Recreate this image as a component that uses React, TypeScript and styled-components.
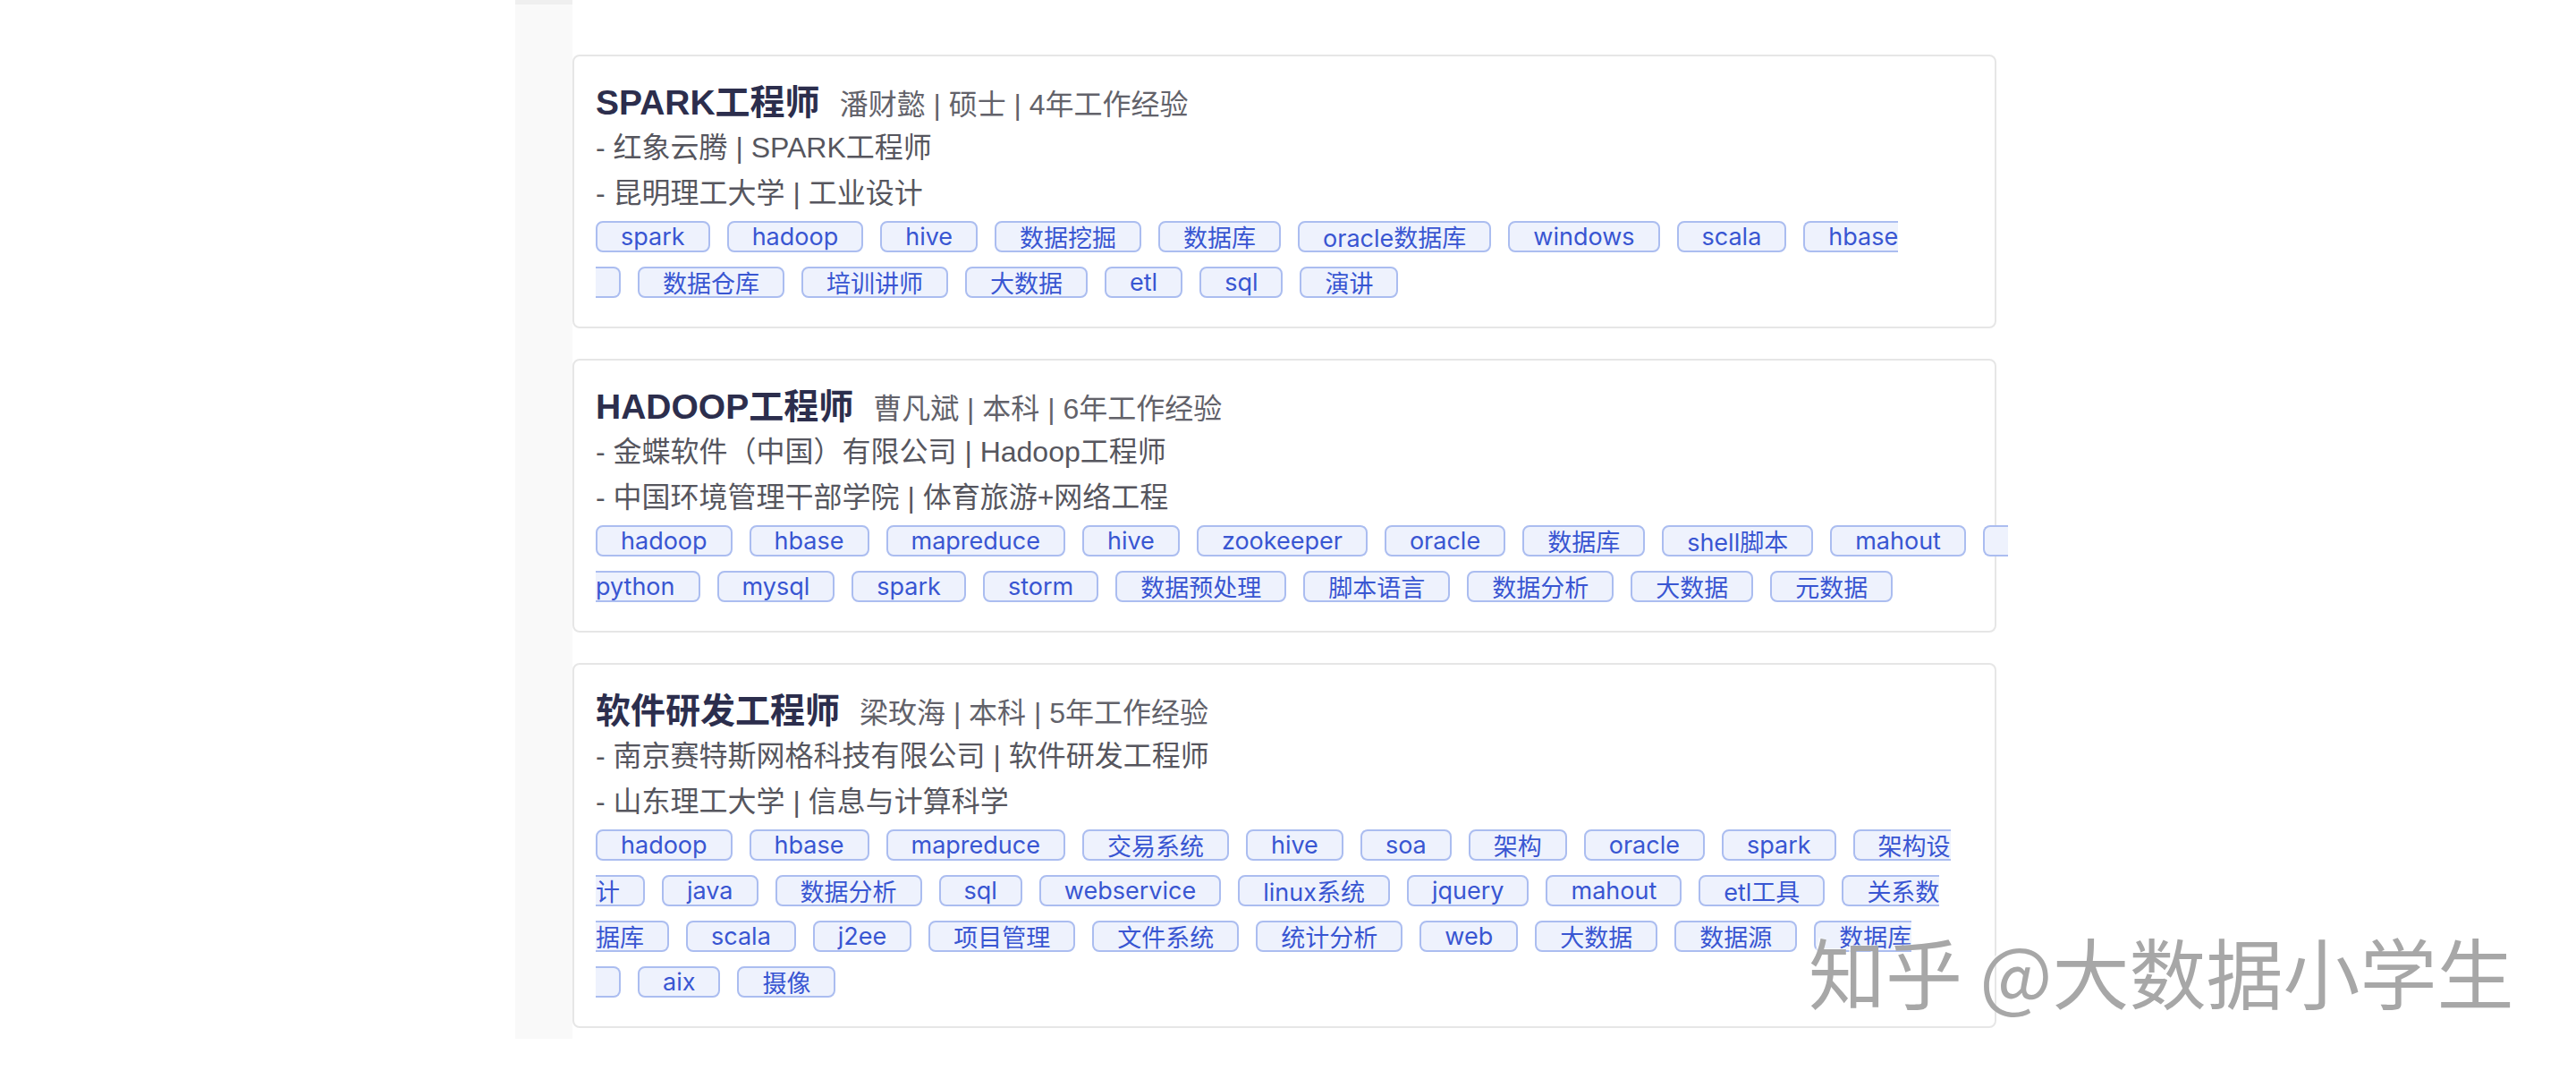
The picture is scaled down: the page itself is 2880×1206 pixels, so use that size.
import React from "react";
import styled, { createGlobalStyle } from "styled-components";

const GlobalStyle = createGlobalStyle`
  html, body {
    margin: 0;
    padding: 0;
    background: #ffffff;
  }
  * { box-sizing: border-box; }
`;

const FONT = `"Liberation Sans", "Noto Sans CJK SC", sans-serif`;
const TAG_FONT = `"Inter", "Noto Sans CJK SC", sans-serif`;

const Page = styled.div`
  position: relative;
  width: 2880px;
  height: 1206px;
  overflow: hidden;
  background: #ffffff;
  font-family: ${FONT};
  display: flex;
  padding-left: 576px;
`;

const Gutter = styled.div`
  width: 64px;
  height: 1161px;
  background: #f9f9f9;
  border-top: 5px solid #efefef;
  flex-shrink: 0;
`;

const CardList = styled.div`
  display: flex;
  flex-direction: column;
  gap: 34px;
  padding-top: 61px;
  width: 1592px;
`;

const Card = styled.section`
  border: 2px solid #e6e6e6;
  border-radius: 8px;
  background: #ffffff;
  padding: 26px 24px 32px 24px;
`;

const TitleLine = styled.div`
  display: flex;
  align-items: baseline;
  height: 51px;
  line-height: 51px;
  white-space: nowrap;
`;

const Title = styled.span`
  font-size: 39px;
  font-weight: 700;
  color: #2c2e4d;
`;

const Meta = styled.span`
  font-size: 32px;
  color: #62626a;
  margin-left: 22px;
`;

const InfoLine = styled.div`
  font-size: 32px;
  line-height: 51px;
  height: 51px;
  color: #56565e;
  white-space: nowrap;
`;

const Tags = styled.div`
  display: flex;
  flex-direction: column;
  gap: 16px;
  margin-top: 5px;
`;

const TagRow = styled.div`
  display: flex;
  gap: 19px;
  flex-wrap: nowrap;
  white-space: nowrap;
`;

type Cut = "none" | "start" | "end";

const Tag = styled.span<{ $cut: Cut }>`
  display: inline-flex;
  align-items: center;
  height: 35px;
  padding: 0 26px;
  font-family: ${TAG_FONT};
  font-size: 27px;
  color: #3956d2;
  background: #eef2fd;
  border: 2px solid #abbdf0;
  border-radius: 8px;
  flex-shrink: 0;
  ${(p) =>
    p.$cut === "start" &&
    `
    border-right: none;
    border-top-right-radius: 0;
    border-bottom-right-radius: 0;
    padding-right: 0;
  `}
  ${(p) =>
    p.$cut === "end" &&
    `
    border-left: none;
    border-top-left-radius: 0;
    border-bottom-left-radius: 0;
    padding-left: 0;
  `}
`;

const Watermark = styled.div`
  position: absolute;
  left: 2022px;
  top: 1036px;
  font-size: 86px;
  line-height: 98px;
  color: #a7a7a7;
  font-family: "Noto Sans CJK SC", "Liberation Sans", sans-serif;
  white-space: nowrap;
  text-shadow: -2px -1px 0 rgba(255, 255, 255, 0.6);
  pointer-events: none;
`;

type TagItem = { t: string; c?: Cut };

type Resume = {
  title: string;
  meta: string;
  lines: string[];
  rows: TagItem[][];
};

const resumes: Resume[] = [
  {
    title: "SPARK工程师",
    meta: "潘财懿 | 硕士 | 4年工作经验",
    lines: ["- 红象云腾 | SPARK工程师", "- 昆明理工大学 | 工业设计"],
    rows: [
      [
        { t: "spark" },
        { t: "hadoop" },
        { t: "hive" },
        { t: "数据挖掘" },
        { t: "数据库" },
        { t: "oracle数据库" },
        { t: "windows" },
        { t: "scala" },
        { t: "hbase", c: "start" },
      ],
      [
        { t: "", c: "end" },
        { t: "数据仓库" },
        { t: "培训讲师" },
        { t: "大数据" },
        { t: "etl" },
        { t: "sql" },
        { t: "演讲" },
      ],
    ],
  },
  {
    title: "HADOOP工程师",
    meta: "曹凡斌 | 本科 | 6年工作经验",
    lines: [
      "- 金蝶软件（中国）有限公司 | Hadoop工程师",
      "- 中国环境管理干部学院 | 体育旅游+网络工程",
    ],
    rows: [
      [
        { t: "hadoop" },
        { t: "hbase" },
        { t: "mapreduce" },
        { t: "hive" },
        { t: "zookeeper" },
        { t: "oracle" },
        { t: "数据库" },
        { t: "shell脚本" },
        { t: "mahout" },
        { t: "", c: "start" },
      ],
      [
        { t: "python", c: "end" },
        { t: "mysql" },
        { t: "spark" },
        { t: "storm" },
        { t: "数据预处理" },
        { t: "脚本语言" },
        { t: "数据分析" },
        { t: "大数据" },
        { t: "元数据" },
      ],
    ],
  },
  {
    title: "软件研发工程师",
    meta: "梁玫海 | 本科 | 5年工作经验",
    lines: [
      "- 南京赛特斯网格科技有限公司 | 软件研发工程师",
      "- 山东理工大学 | 信息与计算科学",
    ],
    rows: [
      [
        { t: "hadoop" },
        { t: "hbase" },
        { t: "mapreduce" },
        { t: "交易系统" },
        { t: "hive" },
        { t: "soa" },
        { t: "架构" },
        { t: "oracle" },
        { t: "spark" },
        { t: "架构设", c: "start" },
      ],
      [
        { t: "计", c: "end" },
        { t: "java" },
        { t: "数据分析" },
        { t: "sql" },
        { t: "webservice" },
        { t: "linux系统" },
        { t: "jquery" },
        { t: "mahout" },
        { t: "etl工具" },
        { t: "关系数", c: "start" },
      ],
      [
        { t: "据库", c: "end" },
        { t: "scala" },
        { t: "j2ee" },
        { t: "项目管理" },
        { t: "文件系统" },
        { t: "统计分析" },
        { t: "web" },
        { t: "大数据" },
        { t: "数据源" },
        { t: "数据库", c: "start" },
      ],
      [{ t: "", c: "end" }, { t: "aix" }, { t: "摄像" }],
    ],
  },
];

export default function App() {
  return (
    <>
      <GlobalStyle />
      <Page>
        <Gutter />
        <CardList>
          {resumes.map((r, i) => (
            <Card key={i}>
              <TitleLine>
                <Title>{r.title}</Title>
                <Meta>{r.meta}</Meta>
              </TitleLine>
              {r.lines.map((l, j) => (
                <InfoLine key={j}>{l}</InfoLine>
              ))}
              <Tags>
                {r.rows.map((row, k) => (
                  <TagRow key={k}>
                    {row.map((tag, m) => (
                      <Tag key={m} $cut={tag.c ?? "none"}>
                        {tag.t}
                      </Tag>
                    ))}
                  </TagRow>
                ))}
              </Tags>
            </Card>
          ))}
        </CardList>
        <Watermark>知乎 @大数据小学生</Watermark>
      </Page>
    </>
  );
}
